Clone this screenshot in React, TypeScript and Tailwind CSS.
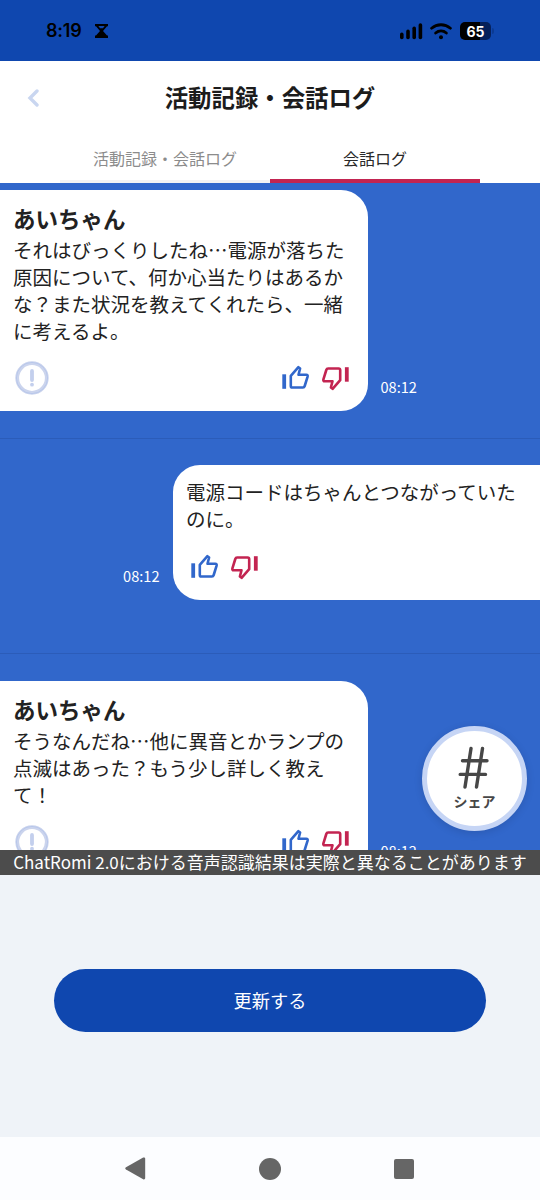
import type { ReactNode } from "react";

type Message = {
  id: number;
  from: "romi" | "user";
  name?: string;
  lines: string[];
  time: string;
};

const messages: Message[] = [
  {
    id: 1,
    from: "romi",
    name: "あいちゃん",
    lines: [
      "それはびっくりしたね…電源が落ちた",
      "原因について、何か心当たりはあるか",
      "な？また状況を教えてくれたら、一緒",
      "に考えるよ。"
    ],
    time: "08:12"
  },
  {
    id: 2,
    from: "user",
    lines: ["電源コードはちゃんとつながっていた", "のに。"],
    time: "08:12"
  },
  {
    id: 3,
    from: "romi",
    name: "あいちゃん",
    lines: ["そうなんだね…他に異音とかランプの", "点滅はあった？もう少し詳しく教え", "て！"],
    time: "08:12"
  }
];

function StatusBar() {
  return (
    <div className="flex h-[60.5px] shrink-0 items-start justify-between bg-[#0f47af] pr-[45px] pl-[46px] pt-[19px] text-black">
      <div className="flex h-6 items-center">
        <span className="w-[36px] font-[Inter,sans-serif] text-[18px] font-semibold leading-6 tracking-[-0.2px]">8:19</span>
        <svg className="ml-[13px] h-[14px] w-[13px]" viewBox="0 0 13 14">
          <path d="M0 0h13v2.200h-1L8 7l4 4.500h1V14H0v-2.500h1L5 7 1 2.200H0z" />
          <path d="M3.400 2h6.200L8 4.200H5z" fill="#0f47af" />
        </svg>
      </div>
      <div className="flex h-6 items-center">
        <svg className="h-[17px] w-[24px]" viewBox="0 0 24 17">
          <rect x="0" y="9.600" width="3.600" height="6.600" rx="1.800" />
          <rect x="6.200" y="6.600" width="3.600" height="9.600" rx="1.800" />
          <rect x="12.400" y="3.400" width="3.600" height="12.800" rx="1.800" />
          <rect x="18.600" y="0.200" width="3.600" height="16" rx="1.800" />
        </svg>
        <svg className="ml-[6px] h-[17px] w-[22px]" viewBox="0 0 22 17" fill="none" stroke="#000" strokeLinecap="round">
          <path d="M1.600 5.200C7 .6 15 .6 20.400 5.200" strokeWidth="2.800" />
          <path d="M5.600 10c3.200-2.700 7.600-2.700 10.800 0" strokeWidth="2.800" />
          <circle cx="11" cy="14.200" r="2" fill="#000" stroke="none" />
        </svg>
        <span className="ml-[8px] flex h-[18px] w-[31px] items-center justify-center rounded-[5px] bg-linear-to-r from-black from-65% to-[#05205a] to-65% font-[Inter,sans-serif] text-[14px] font-bold text-white">
          65
        </span>
        <span className="ml-px mr-px h-[6px] w-[2px] rounded-r-full bg-[#0b3a93]" />
      </div>
    </div>
  );
}

function Header() {
  return (
    <header className="flex h-[122.5px] shrink-0 flex-col bg-white">
      <div className="flex h-[74px] items-center">
        <button className="ml-[27px] w-[12px]" aria-label="戻る">
          <svg className="h-[18px] w-[12px]" viewBox="0 0 12 18" fill="none" stroke="#c9d6f0" strokeWidth="3.400">
            <path d="M10 2 3 9l7 7" strokeLinecap="round" />
          </svg>
        </button>
        <h1 className="flex-1 pr-[39px] text-center text-[23.4px] font-bold text-[#1c1c1c]">活動記録・会話ログ</h1>
      </div>
      <nav className="mx-[60px] flex flex-1 text-[16px]">
        <div className="flex w-1/2 items-center justify-center border-b-3 border-[#f3f3f3] pt-px text-[#8c8c8c]">
          活動記録・会話ログ
        </div>
        <div className="flex w-1/2 items-center justify-center border-b-4 border-[#c32451] pt-[2px] text-[#2a2a2a]">会話ログ</div>
      </nav>
    </header>
  );
}

function ThumbIcon({ down }: { down?: boolean }) {
  return (
    <svg
      className={down ? "size-7 rotate-180" : "size-7"}
      viewBox="0 0 28 28"
      fill="none"
      stroke={down ? "#c32451" : "#3167cb"}
      strokeLinejoin="round"
    >
      <path d="M2.200 10.300v14.500" strokeWidth="3.800" />
      <path
        d="M8.800 11.800 16.400 3.200l1.700 1.300-1.600 6.200h7.800c1.100 0 1.600.9 1.300 2l-2.900 9.300c-.3 1-.8 1.500-1.800 1.500H10.400c-1.100 0-1.600-.6-1.600-1.600z"
        strokeWidth="2.600"
      />
    </svg>
  );
}

function ReportIcon() {
  return (
    <svg className="size-[34px]" viewBox="0 0 34 34" fill="none">
      <circle cx="17" cy="17" r="14.800" stroke="#cbd4ed" strokeWidth="3.800" />
      <circle cx="17" cy="17" r="15.600" stroke="#b4c4ea" strokeWidth="0.800" />
      <path d="M17 10v9" stroke="#c3cfed" strokeWidth="3.800" strokeLinecap="round" />
      <circle cx="17" cy="23.700" r="1.900" fill="#c3cfed" />
    </svg>
  );
}

function Bubble({ mine, children }: { mine: boolean; children: ReactNode }) {
  return (
    <article
      className={`w-[367.5px] shrink-0 bg-white text-[19.5px] leading-[27px] text-[#222] ${
        mine ? "h-[135px] rounded-l-[27px] pt-[13px] pl-[13.5px]" : "rounded-r-[27px] pt-[14px] pb-[16px] pl-[13px]"
      }`}
    >
      {children}
    </article>
  );
}

function MessageRow({ message }: { message: Message }) {
  const mine = message.from === "user";
  return (
    <section
      className={`flex shrink-0 border-b border-[#2b5cb9] ${
        mine ? "h-[215px] flex-row-reverse items-start pt-[26.5px]" : "items-end pt-[27px] pb-[27px]"
      }`}
    >
      <Bubble mine={mine}>
        {message.name ? <h2 className="h-[32px] text-[22.5px] font-bold leading-[29px]">{message.name}</h2> : null}
        {message.lines.map((line) => (
          <p key={line} className="whitespace-nowrap">
            {line}
          </p>
        ))}
        <footer className={`flex items-center ${mine ? "mt-[20.5px] pl-[5px]" : "mt-[17px] justify-between pr-[18.5px] pl-[2px]"}`}>
          {mine ? null : <ReportIcon />}
          <div className="flex gap-[11px]">
            <ThumbIcon />
            <ThumbIcon down />
          </div>
        </footer>
      </Bubble>
      <time className={`text-[14.6px] leading-5 text-white ${mine ? "mt-[101px] mr-[13px]" : "mb-[14px] ml-[13px]"}`}>
        {message.time}
      </time>
    </section>
  );
}

function ShareButton() {
  return (
    <button className="absolute top-[543px] right-[13px] flex size-[105px] flex-col items-center rounded-full border-[5px] border-[#c6d5f5] bg-white pt-[15px] text-[#474747] shadow-[0_2px_8px_rgba(0,0,0,0.12)]">
      <svg
        className="ml-[-2px] h-[43px] w-[31px]"
        viewBox="0 0 31 43"
        fill="none"
        stroke="currentColor"
        strokeWidth="3.400"
        strokeLinecap="round"
      >
        <path d="M13 2.500 7 41M24.500 2.500l-6 38.500M4.500 14.700H29M2.200 28.400h25.300" />
      </svg>
      <span className="mt-[2px] text-[14px] font-bold leading-5">シェア</span>
    </button>
  );
}

function NavigationBar() {
  return (
    <div className="flex h-[63px] shrink-0 items-center justify-between bg-[#fcfdff] pr-[126px] pl-[125px]">
      <svg className="h-[23px] w-[21px]" viewBox="0 0 21 23" fill="#666">
        <path d="M18.200.6 1 10.200c-1 .6-1 1.700 0 2.300l17.200 9.700c1 .5 2 0 2-1.100V1.700c0-1.100-1-1.600-2-1.100z" />
      </svg>
      <span className="size-[22px] rounded-full bg-[#666]" />
      <span className="size-[20px] rounded-[2px] bg-[#666]" />
    </div>
  );
}

export default function App() {
  return (
    <div className="flex h-[1200px] w-[540px] flex-col overflow-hidden bg-[#eff3f8] font-['Noto_Sans_CJK_JP',sans-serif]">
      <StatusBar />
      <Header />
      <main className="relative h-[667px] shrink-0 overflow-hidden bg-[#3167cb]">
        {/* log is scrolled so the first row's top padding is partly hidden */}
        <div className="mt-[-20.500px] flex flex-col">
          {messages.map((message) => (
            <MessageRow key={message.id} message={message} />
          ))}
        </div>
        <ShareButton />
      </main>
      <p className="h-[24.5px] shrink-0 bg-[#4c4c4c] text-center text-[17px] leading-[24px] whitespace-nowrap text-white">
        ChatRomi 2.0における音声認識結果は実際と異なることがあります
      </p>
      <div className="flex flex-1 items-center justify-center pb-[10px]">
        <button className="h-[63px] w-[432px] rounded-full bg-[#0f47af] text-[18.200px] text-white">更新する</button>
      </div>
      <NavigationBar />
    </div>
  );
}
